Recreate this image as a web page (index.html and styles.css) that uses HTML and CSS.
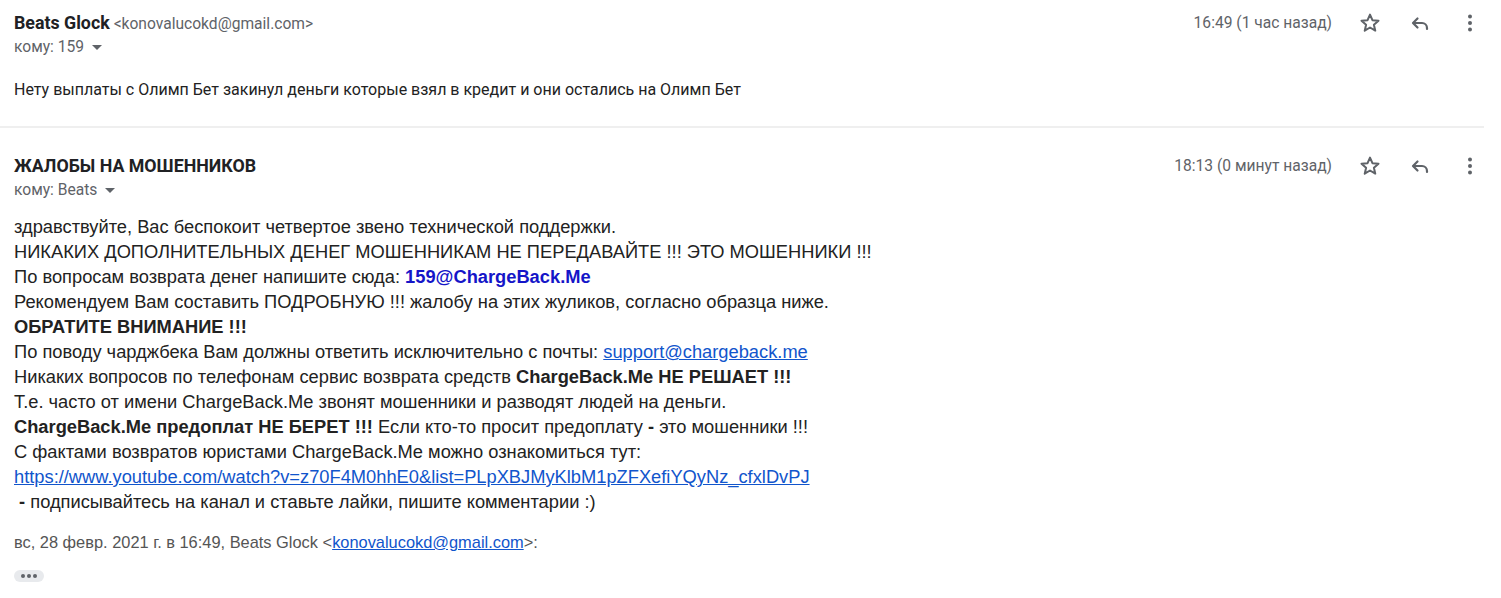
FILE: index.html
```html
<!DOCTYPE html>
<html lang="ru">
<head>
<meta charset="utf-8">
<link rel="stylesheet" href="styles.css">
</head>
<body>
<div class="thread">
  <div class="msg msg1">
    <div class="head">
      <div class="who">
        <div class="from"><span class="name">Beats Glock</span> <span class="addr">&lt;konovalucokd@gmail.com&gt;</span></div>
        <div class="to">кому: 159 <span class="caret"></span></div>
      </div>
      <div class="meta">
        <span class="time">16:49 (1 час назад)</span>
        <span class="icon"><svg viewBox="0 0 24 24" width="24" height="24"><path d="M12 3.6l2.45 5.6 6.05.52-4.6 4 1.38 5.930L12 16.5l-5.28 3.15 1.38-5.93-4.6-4 6.05-.52z" fill="none" stroke="#5f6368" stroke-width="2" stroke-linejoin="round"/></svg></span>
        <span class="icon"><svg viewBox="0 0 24 24" width="24" height="24"><path d="M9.5 7.5L5 12l4.5 4.5M5.5 12H14a5 5 0 0 1 5 5v1" fill="none" stroke="#5f6368" stroke-width="2.2" stroke-linecap="round" stroke-linejoin="round"/></svg></span>
        <span class="icon"><svg viewBox="0 0 24 24" width="24" height="24"><circle cx="12" cy="5.5" r="2" fill="#5f6368"/><circle cx="12" cy="12" r="2" fill="#5f6368"/><circle cx="12" cy="18.5" r="2" fill="#5f6368"/></svg></span>
      </div>
    </div>
    <div class="body1">Нету выплаты с Олимп Бет закинул деньги которые взял в кредит и они остались на Олимп Бет</div>
  </div>
  <div class="sep"></div>
  <div class="msg msg2">
    <div class="head">
      <div class="who">
        <div class="from"><span class="name">ЖАЛОБЫ НА МОШЕННИКОВ</span></div>
        <div class="to">кому: Beats <span class="caret"></span></div>
      </div>
      <div class="meta">
        <span class="time">18:13 (0 минут назад)</span>
        <span class="icon"><svg viewBox="0 0 24 24" width="24" height="24"><path d="M12 3.6l2.45 5.6 6.05.52-4.6 4 1.38 5.93L12 16.5l-5.28 3.15 1.38-5.93-4.6-4 6.05-.52z" fill="none" stroke="#5f6368" stroke-width="2" stroke-linejoin="round"/></svg></span>
        <span class="icon"><svg viewBox="0 0 24 24" width="24" height="24"><path d="M9.5 7.5L5 12l4.5 4.5M5.5 12H14a5 5 0 0 1 5 5v1" fill="none" stroke="#5f6368" stroke-width="2.2" stroke-linecap="round" stroke-linejoin="round"/></svg></span>
        <span class="icon"><svg viewBox="0 0 24 24" width="24" height="24"><circle cx="12" cy="5.5" r="2" fill="#5f6368"/><circle cx="12" cy="12" r="2" fill="#5f6368"/><circle cx="12" cy="18.5" r="2" fill="#5f6368"/></svg></span>
      </div>
    </div>
    <div class="body2">
      <div>здравствуйте, Вас беспокоит четвертое звено технической поддержки.</div>
      <div>НИКАКИХ ДОПОЛНИТЕЛЬНЫХ ДЕНЕГ МОШЕННИКАМ НЕ ПЕРЕДАВАЙТЕ !!! ЭТО МОШЕННИКИ !!!</div>
      <div>По вопросам возврата денег напишите сюда: <b class="blue">159@ChargeBack.Me</b></div>
      <div>Рекомендуем Вам составить ПОДРОБНУЮ !!! жалобу на этих жуликов, согласно образца ниже.</div>
      <div><b>ОБРАТИТЕ ВНИМАНИЕ !!!</b></div>
      <div>По поводу чарджбека Вам должны ответить исключительно с почты: <a class="link" href="#">support@chargeback.me</a></div>
      <div>Никаких вопросов по телефонам сервис возврата средств <b>ChargeBack.Me НЕ РЕШАЕТ !!!</b></div>
      <div>Т.е. часто от имени ChargeBack.Me звонят мошенники и разводят людей на деньги.</div>
      <div><b>ChargeBack.Me предоплат НЕ БЕРЕТ !!!</b> Если кто-то просит предоплату <b>-</b> это мошенники !!!</div>
      <div>С фактами возвратов юристами ChargeBack.Me можно ознакомиться тут:</div>
      <div><a class="link" href="#">https://www.youtube.com/watch?v=z70F4M0hhE0&amp;list=PLpXBJMyKlbM1pZFXefiYQyNz_cfxlDvPJ</a></div>
      <div>&nbsp;<b>-</b> подписывайтесь на канал и ставьте лайки, пишите комментарии :)</div>
    </div>
    <div class="quote">вс, 28 февр. 2021 г. в 16:49, Beats Glock &lt;<a class="link" href="#">konovalucokd@gmail.com</a>&gt;:</div>
    <div class="dots"><span></span><span></span><span></span></div>
  </div>
</div>
</body>
</html>
```
FILE: styles.css
```css
html, body {
  margin: 0;
  padding: 0;
  background: #fff;
}
body {
  font-family: Roboto, "Liberation Sans", Arial, sans-serif;
  color: #222;
}
.thread {
  width: 1484px;
}
.msg {
  padding-left: 14px;
  box-sizing: border-box;
}
.msg1 {
  height: 126px;
}
.head {
  display: flex;
  justify-content: space-between;
  align-items: flex-start;
}
.msg1 .head {
  padding-top: 12px;
}
.msg2 .head {
  padding-top: 27px;
}
.from {
  height: 22px;
  line-height: 22px;
  white-space: nowrap;
}
.name {
  font-weight: 700;
  font-size: 17.8px;
  color: #202124;
}
.addr {
  font-size: 15.6px;
  color: #5f6368;
}
.to {
  font-size: 15.6px;
  color: #5f6368;
  height: 26px;
  line-height: 26px;
  display: flex;
  align-items: center;
}
.caret {
  display: inline-block;
  width: 0;
  height: 0;
  border-left: 5px solid transparent;
  border-right: 5px solid transparent;
  border-top: 5px solid #5f6368;
  margin-left: 8px;
  margin-top: 1px;
}
.meta {
  display: flex;
  align-items: center;
  height: 22px;
}
.time {
  font-size: 15.6px;
  color: #5f6368;
  margin-right: 26px;
}
.icon {
  display: flex;
  width: 24px;
  height: 24px;
  margin-right: 26px;
}
.icon:last-child {
  margin-right: 2px;
}
.body1 {
  font-size: 16px;
  color: #222;
  line-height: 20px;
  padding-top: 20px;
}
.sep {
  height: 2px;
  background: #efefef;
}
.body2 {
  font-family: "Liberation Sans", Arial, sans-serif;
  font-size: 18.3px;
  line-height: 25px;
  color: #222;
  padding-top: 11px;
}
.blue {
  color: #1515c8;
}
.link {
  color: #1155cc;
  text-decoration: underline;
}
.quote {
  font-family: "Liberation Sans", Arial, sans-serif;
  font-size: 16.4px;
  color: #555;
  margin-top: 18px;
  line-height: 20px;
}
.dots {
  margin-top: 18px;
  width: 30px;
  height: 12px;
  background: #e8eaed;
  border-radius: 6px;
  display: flex;
  align-items: center;
  justify-content: center;
  gap: 2px;
}
.dots span {
  width: 4px;
  height: 4px;
  border-radius: 50%;
  background: #5f6368;
}
```
